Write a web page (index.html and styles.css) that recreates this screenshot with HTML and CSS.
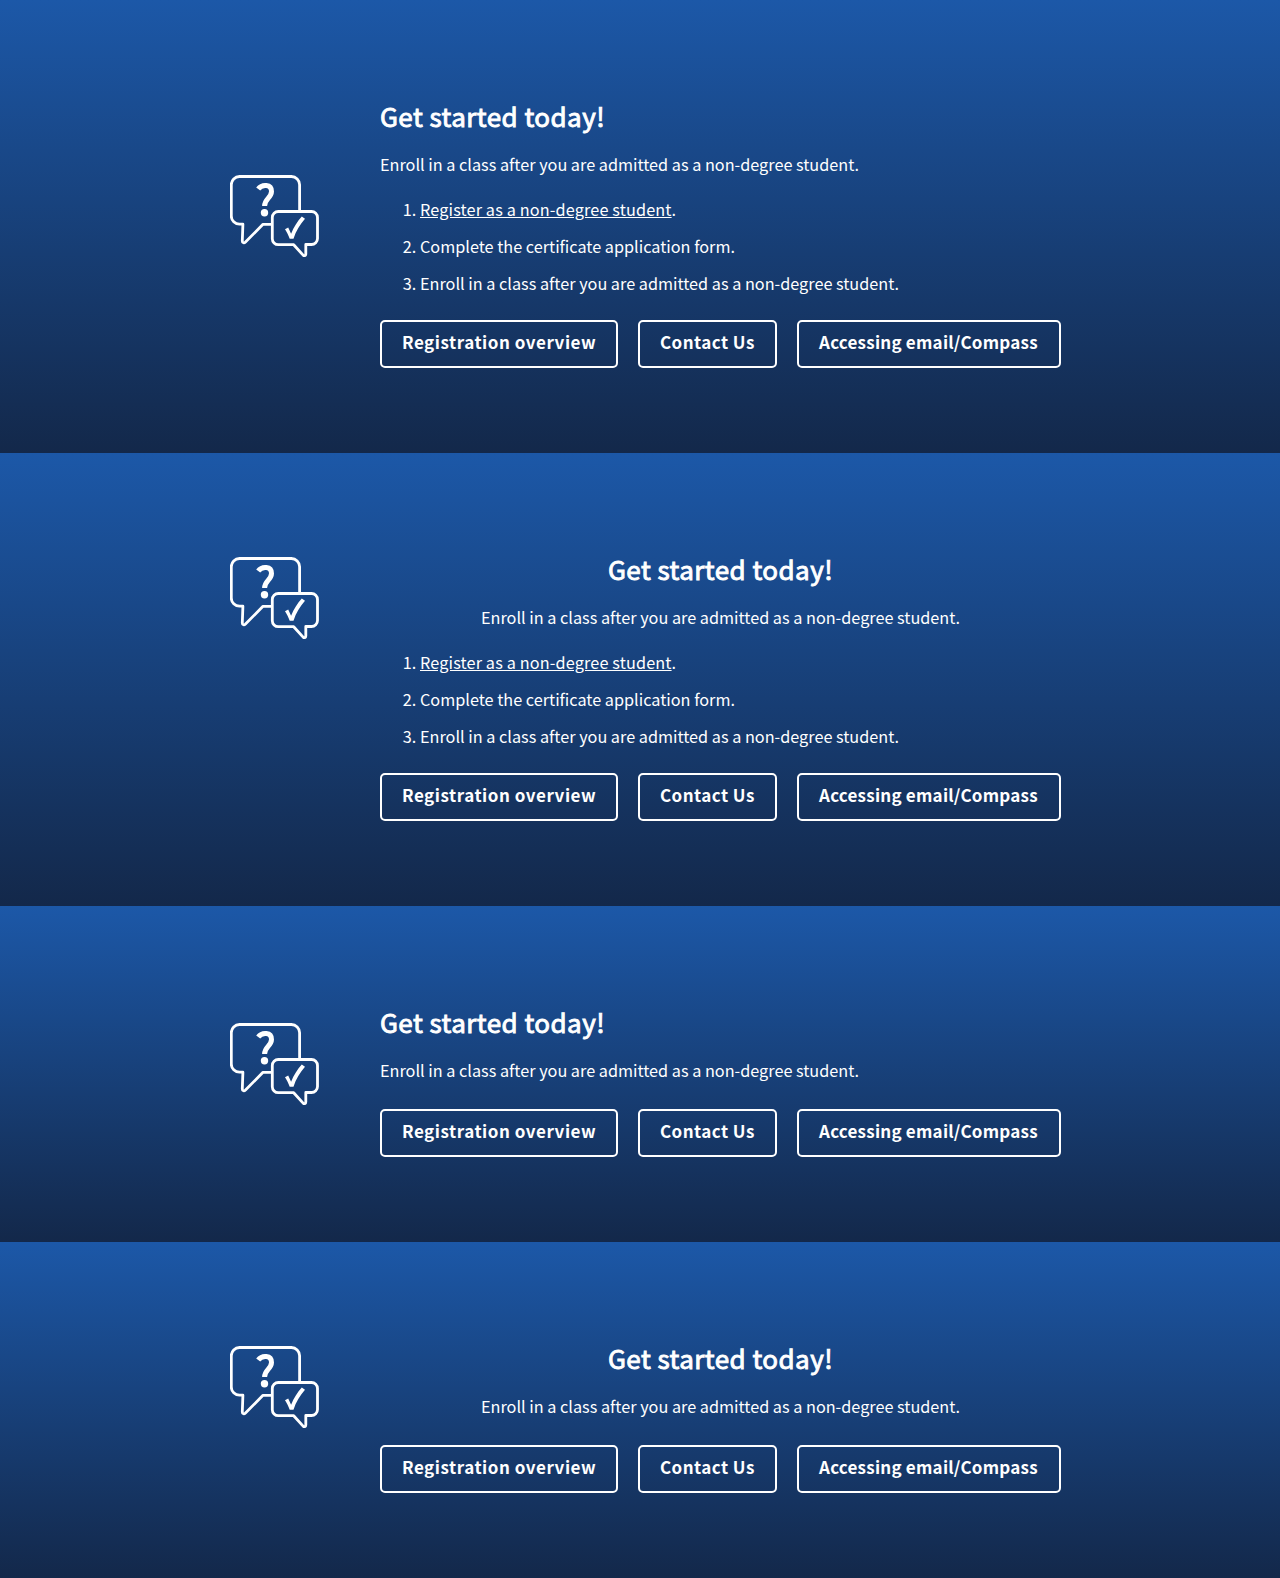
FILE: index.html
```html
<!DOCTYPE html>
<html lang="en">
<head>
<meta charset="utf-8">
<title>Get started today!</title>
<link rel="stylesheet" href="styles.css">
</head>
<body>
<svg class="defs" aria-hidden="true">
  <symbol id="chat" viewBox="10 10 90 84">
    <g fill="none" stroke="#fff" stroke-width="2.8" stroke-linejoin="round">
      <path d="M79.600 45.500V19.700a8.200 8.200 0 0 0-8.200-8.200H19.500a8.200 8.200 0 0 0-8.200 8.200V51a8.200 8.200 0 0 0 8.200 8.200h3.400L22.300 76c0 2 1.800 2.300 3.200 1L43 59.300h9"/>
      <path d="M58.300 46.500h33.200a6 6 0 0 1 6 6v21a6 6 0 0 1-6 6h-5.700v9.600c0 1.800-1.500 2-2.700 1L73.700 79.700H58.300a6 6 0 0 1-6-6V52.500a6 6 0 0 1 6-6Z"/>
    </g>
    <path fill="none" stroke="#fff" stroke-width="5" d="M38.200 24C42 18.900 51.600 19 51.500 26.500C51.400 33 44.400 34 44.600 41"/>
    <circle cx="44.500" cy="47.800" r="3.700" fill="#fff"/>
    <path fill="#fff" d="M65 64.200l3.200-1.700 2.900 6.200c2.800-6.800 6.200-12.200 10.700-17.200l3.200 2.200c-5 5.800-9 12-11.500 20.100h-3.800c-1.300-3.700-2.800-6.500-4.700-9.600Z"/>
  </symbol>
</svg>

<section class="cta cta--middle">
  <svg class="icon"><use href="#chat"/></svg>
  <div class="content">
    <h2>Get started today!</h2>
    <p>Enroll in a class after you are admitted as a non-degree student.</p>
    <ol>
      <li><a href="#">Register as a non-degree student</a>.</li>
      <li>Complete the certificate application form.</li>
      <li>Enroll in a class after you are admitted as a non-degree student.</li>
    </ol>
    <div class="buttons"><a class="button overview" href="#">Registration overview</a><a class="button contact" href="#">Contact Us</a><a class="button access" href="#">Accessing email/Compass</a></div>
  </div>
</section>

<section class="cta cta--centered">
  <svg class="icon"><use href="#chat"/></svg>
  <div class="content">
    <h2>Get started today!</h2>
    <p>Enroll in a class after you are admitted as a non-degree student.</p>
    <ol>
      <li><a href="#">Register as a non-degree student</a>.</li>
      <li>Complete the certificate application form.</li>
      <li>Enroll in a class after you are admitted as a non-degree student.</li>
    </ol>
    <div class="buttons"><a class="button overview" href="#">Registration overview</a><a class="button contact" href="#">Contact Us</a><a class="button access" href="#">Accessing email/Compass</a></div>
  </div>
</section>

<section class="cta cta--middle cta--short">
  <svg class="icon"><use href="#chat"/></svg>
  <div class="content">
    <h2>Get started today!</h2>
    <p>Enroll in a class after you are admitted as a non-degree student.</p>
    <div class="buttons"><a class="button overview" href="#">Registration overview</a><a class="button contact" href="#">Contact Us</a><a class="button access" href="#">Accessing email/Compass</a></div>
  </div>
</section>

<section class="cta cta--centered cta--short">
  <svg class="icon"><use href="#chat"/></svg>
  <div class="content">
    <h2>Get started today!</h2>
    <p>Enroll in a class after you are admitted as a non-degree student.</p>
    <div class="buttons"><a class="button overview" href="#">Registration overview</a><a class="button contact" href="#">Contact Us</a><a class="button access" href="#">Accessing email/Compass</a></div>
  </div>
</section>
</body>
</html>
```

FILE: styles.css
```css
* { box-sizing: border-box; }
body {
  margin: 0;
  color: #fff;
  font-family: "Noto Sans CJK SC", "Noto Sans", sans-serif;
  font-size: 16.24px;
  line-height: 28px;
}
.defs { display: none; }
.cta {
  display: flex;
  align-items: flex-start;
  gap: 60px;
  height: 453px;
  padding: 98px 219px 85px 230px;
  background: linear-gradient(#1c58a8, #13284a);
}
.cta--short { height: 336px; }
.icon {
  flex: none;
  width: 90px;
  height: 84px;
  margin-top: 6px;
}
.cta--middle .icon { margin-top: 77px; }
.cta--middle.cta--short .icon { margin-top: 19px; }
.content { flex: 1; }
h2 {
  margin: 0;
  font-size: 26px;
  line-height: 36px;
  font-weight: 400;
  letter-spacing: 0.46px;
  -webkit-text-stroke: 0.9px #fff;
}
p { margin: 16px 0 0; }
.cta--centered h2, .cta--centered p { width: 681px; text-align: center; }
ol { margin: 17px 0 0; padding-left: 40px; }
li { height: 28px; margin-bottom: 9px; }
li a { color: inherit; letter-spacing: 0.14px; }
.buttons { display: flex; gap: 20px; padding-top: 14px; }
.cta--short .buttons { padding-top: 25px; }
.button {
  height: 48px;
  padding: 6px 0 0 20px;
  border: 2px solid #fff;
  border-radius: 5px;
  color: #fff;
  font-size: 17px;
  font-weight: 700;
  text-decoration: none;
  white-space: nowrap;
}
.overview { width: 238px; letter-spacing: 0.53px; }
.contact { width: 139px; letter-spacing: 0.45px; }
.access { width: 264px; letter-spacing: 0.23px; }
```
